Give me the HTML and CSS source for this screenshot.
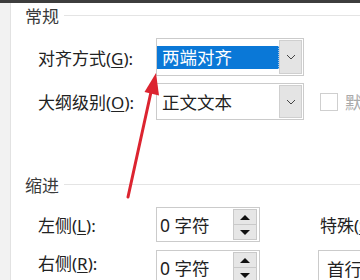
FILE: index.html
```html
<!DOCTYPE html>
<html lang="zh-CN">
<head>
  <meta charset="UTF-8" />
  <title>段落</title>
  <link rel="stylesheet" href="styles.css">
</head>
<body>
  <div class="topbar"></div>

  <div class="frame">
    <div class="side"></div>

    <div class="panel">
      <div class="group-title"><span>常规</span><i></i></div>

      <div class="row r1">
        <label class="lbl">对齐方式(<u>G</u>):</label>
        <div class="combo">
          <div class="combo-val sel">两端对齐</div>
          <div class="combo-btn">
            <svg width="10" height="6" viewBox="0 0 10 6"><path d="M1 1 L5 5 L9 1" fill="none" stroke="#444" stroke-width="1"/></svg>
          </div>
        </div>
      </div>

      <div class="row r2">
        <label class="lbl">大纲级别(<u>O</u>):</label>
        <div class="combo">
          <div class="combo-val">正文文本</div>
          <div class="combo-btn">
            <svg width="10" height="6" viewBox="0 0 10 6"><path d="M1 1 L5 5 L9 1" fill="none" stroke="#444" stroke-width="1"/></svg>
          </div>
        </div>
        <span class="check"></span>
        <span class="check-lbl">默认情况下折叠</span>
      </div>

      <div class="group-title g2"><span>缩进</span><i></i></div>

      <div class="row r3">
        <label class="lbl">左侧(<u>L</u>):</label>
        <div class="spin">
          <span class="spin-val">0 字符</span>
          <div class="spin-btns">
            <div class="spin-btn"><b class="up"></b></div>
            <div class="spin-btn"><b class="down"></b></div>
          </div>
        </div>
        <label class="lbl2">特殊(<u>S</u>):</label>
      </div>

      <div class="row r4">
        <label class="lbl">右侧(<u>R</u>):</label>
        <div class="spin">
          <span class="spin-val">0 字符</span>
          <div class="spin-btns">
            <div class="spin-btn"><b class="up"></b></div>
            <div class="spin-btn"><b class="down"></b></div>
          </div>
        </div>
        <div class="box2">首行缩进</div>
      </div>
    </div>
  </div>

  <!-- annotation arrow drawn over the dialog -->
  <svg class="arrow" width="360" height="280" viewBox="0 0 360 280">
    <path d="M128 197 L151 92" stroke="#dc2430" stroke-width="3" stroke-linecap="round" fill="none"/>
    <polygon points="156,73 144.5,92 159,95.5" fill="#dc2430"/>
  </svg>
</body>
</html>
```

FILE: styles.css
```css
html, body {
  margin: 0;
  padding: 0;
  width: 360px;
  height: 280px;
  overflow: hidden;
  background: #fff;
  font-family: "Noto Sans", "Noto Sans CJK SC", sans-serif;
  color: #222;
}

.topbar {
  height: 3px;
  background: #3d3d3d;
}

.frame {
  display: flex;
  height: 277px;
}

.side {
  width: 10px;
  background: #f2f2f2;
  border-right: 1px solid #e2e2e2;
  flex-shrink: 0;
}

.panel {
  flex: 1;
  padding-left: 14px;
  overflow: hidden;
}

.group-title {
  height: 24px;
  display: flex;
  align-items: center;
  gap: 5px;
  font-size: 17px;
  color: #3a3a3a;
}

.group-title i {
  flex: 1;
  border-top: 1px solid #e4e4e4;
  margin-top: 1px;
}

.g2 {
  margin-top: 52px;
}

.row {
  display: flex;
  align-items: center;
  padding-left: 13px;
  white-space: nowrap;
}

.lbl {
  width: 118px;
  flex-shrink: 0;
  font-size: 17px;
}

u {
  text-decoration-thickness: 1px;
  text-underline-offset: 2px;
}

.r1 { margin-top: 11px; height: 38px; }
.r2 { margin-top: 7px; height: 37px; }
.r3 { margin-top: 11px; height: 35px; }
.r4 { margin-top: 8px; height: 35px; align-items: flex-start; }

.combo {
  width: 148px;
  height: 100%;
  box-sizing: border-box;
  border: 1px solid #cbcbcb;
  display: flex;
  align-items: center;
  padding: 1px 1px 1px 0;
  flex-shrink: 0;
}

.combo-val {
  flex: 1;
  font-size: 17.5px;
  padding-left: 5px;
  color: #222;
}

.combo-val.sel {
  background: #0a78d7;
  color: #fff;
  height: 23px;
  line-height: 23px;
  align-self: center;
  border-right: 1px dotted #9cc6ee;
}

.combo-btn {
  width: 23px;
  height: 100%;
  box-sizing: border-box;
  background: #e4e4e4;
  border: 1px solid #cfcfcf;
  display: flex;
  align-items: center;
  justify-content: center;
}

.check {
  width: 18px;
  height: 18px;
  box-sizing: border-box;
  border: 1px solid #cfcfcf;
  margin-left: 16px;
  flex-shrink: 0;
}

.check-lbl {
  margin-left: 7px;
  font-size: 17px;
  color: #aaa;
}

.spin {
  width: 104px;
  height: 35px;
  box-sizing: border-box;
  border: 1px solid #cbcbcb;
  display: flex;
  align-items: center;
  padding: 1px 2px 1px 0;
  flex-shrink: 0;
}

.spin-val {
  flex: 1;
  font-size: 17.5px;
  padding-left: 3px;
}

.spin-btns {
  width: 24px;
  height: 31px;
  display: flex;
  flex-direction: column;
}

.spin-btn {
  flex: 1;
  background: #e6e6e6;
  border: 1px solid #c9c9c9;
  display: flex;
  align-items: center;
  justify-content: center;
}

.spin-btn + .spin-btn {
  border-top: none;
}

.spin-btn b {
  width: 0;
  height: 0;
  border-left: 5px solid transparent;
  border-right: 5px solid transparent;
}

.spin-btn .up { border-bottom: 5px solid #111; }
.spin-btn .down { border-top: 5px solid #111; }

.lbl2 {
  margin-left: 60px;
  font-size: 17px;
}

.box2 {
  margin-left: 58px;
  height: 40px;
  flex: 1;
  box-sizing: border-box;
  border: 1px solid #cbcbcb;
  border-right: none;
  font-size: 17.5px;
  padding: 5px 0 0 8px;
}

.arrow {
  position: absolute;
  top: 0;
  left: 0;
  pointer-events: none;
}
```
